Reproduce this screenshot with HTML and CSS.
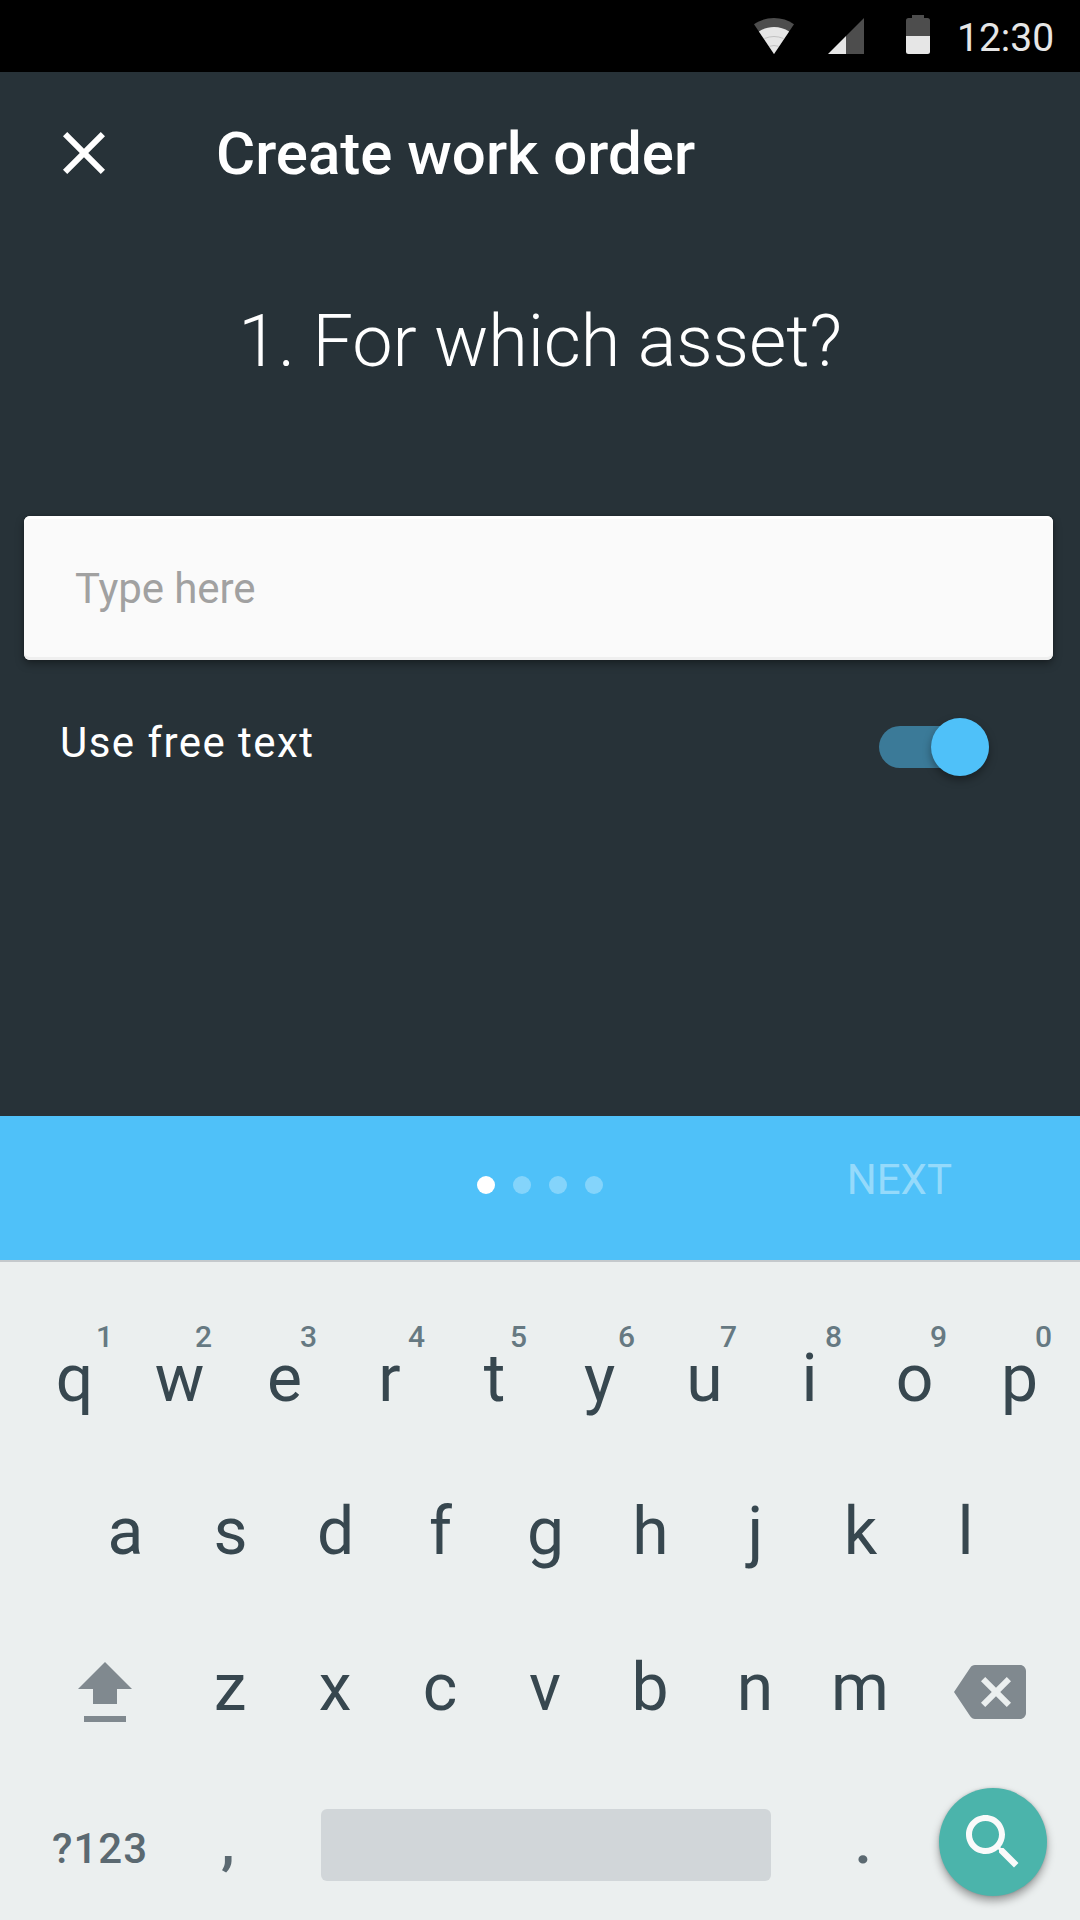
FILE: index.html
```html
<!DOCTYPE html>
<html lang="en">
<head>
<meta charset="utf-8">
<title>Create work order</title>
<link rel="stylesheet" href="styles.css">
</head>
<body>
<div class="screen">
  <div class="status-bar">
    <svg class="wifi" width="40" height="36" viewBox="0 0 40 36">
      <path fill="#4d4d4d" d="M20 36 0 6.300C5.800 2.200 12.700 0 20 0s14.200 2.200 20 6.300z"/>
      <path fill="#e6e6e6" d="M20 36 4.900 13.500C9.300 10.600 14.500 9 20 9s10.700 1.600 15.100 4.500z"/>
      <path fill="none" stroke="#b8b8b8" stroke-width=".8" d="M10.500 20.500Q20 16.500 29.500 20.500M15.500 28.300Q20 26.700 24.500 28.300"/>
    </svg>
    <svg class="signal" width="36" height="36" viewBox="0 0 36 36">
      <path fill="#4d4d4d" d="M36 0v36H18V18z"/>
      <path fill="#e6e6e6" d="M18 18v18H0z"/>
    </svg>
    <svg class="battery" width="24" height="39" viewBox="0 0 24 39">
      <path fill="#4d4d4d" d="M6 0h12v3h3.500A2.500 2.500 0 0 1 24 5.500V21H0V5.500A2.500 2.500 0 0 1 2.500 3H6z"/>
      <path fill="#e6e6e6" d="M0 21h24v15.500a2.500 2.500 0 0 1-2.500 2.500h-19A2.500 2.500 0 0 1 0 36.500z"/>
    </svg>
    <span class="clock">12:30</span>
  </div>

  <header class="app-bar">
    <svg class="close" width="72" height="72" viewBox="0 0 24 24"><path fill="#fff" d="M19 6.410 17.590 5 12 10.590 6.410 5 5 6.410 10.590 12 5 17.590 6.410 19 12 13.410 17.590 19 19 17.590 13.410 12z"/></svg>
    <h1 class="title">Create work order</h1>
  </header>

  <main class="form">
    <h2 class="question">1. For which asset?</h2>
    <div class="field">Type here</div>
    <div class="option">
      <span class="option-label">Use free text</span>
      <span class="switch"><span class="thumb"></span></span>
    </div>
  </main>

  <nav class="stepper">
    <div class="dots"><i class="dot active"></i><i class="dot"></i><i class="dot"></i><i class="dot"></i></div>
    <span class="next">NEXT</span>
  </nav>

  <section class="keyboard">
    <div class="row row-top">
      <span class="key">q<sup class="hint hint-1">1</sup></span>
      <span class="key">w<sup class="hint">2</sup></span>
      <span class="key">e<sup class="hint">3</sup></span>
      <span class="key">r<sup class="hint hint-4">4</sup></span>
      <span class="key">t<sup class="hint">5</sup></span>
      <span class="key">y<sup class="hint hint-6">6</sup></span>
      <span class="key">u<sup class="hint">7</sup></span>
      <span class="key">i<sup class="hint">8</sup></span>
      <span class="key">o<sup class="hint">9</sup></span>
      <span class="key">p<sup class="hint">0</sup></span>
    </div>
    <div class="row row-home">
      <span class="key">a</span><span class="key">s</span><span class="key">d</span><span class="key">f</span><span class="key">g</span><span class="key">h</span><span class="key">j</span><span class="key">k</span><span class="key">l</span>
    </div>
    <div class="row row-bottom">
      <span class="key shift"><svg width="54" height="60" viewBox="0 0 54 60"><path fill="#80898f" d="M27 0 54 27H39v15H15V27H0zM6 54h42v6H6z"/></svg></span>
      <span class="key">z</span><span class="key">x</span><span class="key">c</span><span class="key">v</span><span class="key">b</span><span class="key">n</span><span class="key">m</span>
      <span class="key backspace"><svg width="72" height="72" viewBox="0 0 24 24"><path fill="#80898f" d="M22 3H7c-.690 0-1.230.350-1.590.880L0 12l5.410 8.110c.360.530.900.890 1.590.890h15c1.100 0 2-.900 2-2V5c0-1.100-.900-2-2-2zm-3 12.590L17.590 17 14 13.410 10.410 17 9 15.590 12.590 12 9 8.410 10.410 7 14 10.590 17.590 7 19 8.410 15.410 12z"/></svg></span>
    </div>
    <div class="row row-space">
      <span class="symbols">?123</span>
      <span class="punct comma">,</span>
      <span class="space"></span>
      <span class="punct period">.</span>
      <span class="search"><svg width="72" height="72" viewBox="0 0 24 24"><path fill="#fafafa" d="M15.500 14h-.790l-.280-.270C15.410 12.590 16 11.110 16 9.500 16 5.910 13.090 3 9.500 3S3 5.910 3 9.500 5.910 16 9.500 16c1.610 0 3.090-.590 4.230-1.570l.270.280v.790l5 4.990L20.490 19zm-6 0C7.010 14 5 11.990 5 9.500S7.010 5 9.500 5 14 7.010 14 9.500 11.990 14 9.500 14z"/></svg></span>
    </div>
  </section>
</div>
</body>
</html>
```
FILE: styles.css
```css
* {
  box-sizing: border-box;
}

body {
  margin: 0;
  font-family: Roboto, sans-serif;
}

svg {
  display: block;
  flex: none;
}

.screen {
  display: flex;
  flex-direction: column;
  width: 1080px;
  height: 1920px;
  overflow: hidden;
  background: #273238;
  color: #fff;
}

.status-bar {
  display: flex;
  justify-content: flex-end;
  height: 72px;
  padding: 15px 26px 0 0;
  background: #000;
}

.wifi {
  margin: 3px 34px 0 0;
}

.signal {
  margin: 3px 42px 0 0;
}

.clock {
  width: 124px;
  padding-left: 27px;
  font-size: 39px;
  line-height: 47px;
  color: #e6e6e6;
  white-space: nowrap;
}

.app-bar {
  display: flex;
  align-items: center;
  gap: 96px;
  height: 162px;
  padding-left: 48px;
}

.title {
  margin: 0;
  padding-top: 2px;
  font-size: 60px;
  font-weight: 500;
  line-height: 72px;
}

.form {
  height: 882px;
  padding: 66px 27px 0 24px;
}

.question {
  margin: 0 0 132px;
  padding-left: 3px;
  font-size: 72px;
  font-weight: 300;
  line-height: 84px;
  letter-spacing: -.1px;
  text-align: center;
}

.field {
  height: 144px;
  padding-left: 51px;
  border-radius: 6px;
  background: #fafafa;
  box-shadow: 0 4px 8px rgba(0, 0, 0, .35), 0 0 3px rgba(0, 0, 0, .2), inset 0 3px 0 #fff, inset 0 -3px 0 #efefef;
  color: #a1a1a1;
  font-size: 42px;
  line-height: 145px;
  letter-spacing: -.1px;
}

.option {
  display: flex;
  justify-content: space-between;
  align-items: center;
  height: 60px;
  margin-top: 57px;
  padding: 0 64px 0 36px;
}

.option-label {
  padding-bottom: 10px;
  font-size: 42px;
  line-height: 49px;
  letter-spacing: 1.450px;
}

.switch {
  display: flex;
  justify-content: flex-end;
  align-items: center;
  width: 110px;
  height: 42px;
  border-radius: 21px;
  background: #3b7a98;
}

.thumb {
  flex: none;
  width: 58px;
  height: 58px;
  border-radius: 50%;
  background: #4fc1f9;
  box-shadow: 0 4px 8px rgba(0, 0, 0, .35);
}

.stepper {
  display: grid;
  grid-template-columns: 1fr auto 1fr;
  align-items: center;
  height: 144px;
  background: #4fc1f9;
}

.dots {
  grid-column: 2;
  display: flex;
  gap: 18px;
  padding-bottom: 6px;
}

.dot {
  width: 18px;
  height: 18px;
  border-radius: 50%;
  background: #84d4fb;
}

.dot.active {
  background: #fff;
}

.next {
  justify-self: end;
  padding: 0 128px 17px 0;
  font-size: 42px;
  line-height: 49px;
  color: #95dafb;
}

.keyboard {
  flex: 1;
  padding-top: 40px;
  border-top: 2px solid #c4c9cc;
  background: #ebefef;
  color: #37474f;
}

.row {
  display: flex;
  align-items: center;
  height: 153px;
  font-size: 66px;
}

.row-top {
  padding-left: 22px;
}

.row-home {
  padding: 1px 0 0 73px;
}

.row-bottom {
  height: 159px;
  padding-left: 52.500px;
}

.key {
  position: relative;
  display: flex;
  justify-content: center;
  flex: none;
  width: 105px;
  line-height: 78px;
}

.hint {
  position: absolute;
  top: -21px;
  left: 68px;
  font-size: 30px;
  font-weight: 500;
  line-height: 36px;
  color: #667982;
}

.hint-1 {
  left: 74px;
}

.hint-4 {
  left: 71px;
}

.hint-6 {
  left: 71px;
}

.shift {
  margin-right: 20px;
  padding-top: 9px;
}

.backspace {
  margin-left: 25px;
  padding-top: 9px;
}

.row-space {
  color: #5b6971;
  font-weight: 500;
}

.symbols {
  width: 167px;
  padding: 10px 0 0 52px;
  font-size: 42px;
  letter-spacing: 1px;
}

.punct {
  font-size: 56px;
  font-weight: 700;
  line-height: 64px;
}

.comma {
  width: 100px;
  margin-left: 54px;
}

.space {
  width: 450px;
  height: 72px;
  margin-top: 3px;
  border-radius: 6px;
  background: #d1d6d9;
}

.period {
  width: 84px;
  margin-left: 84px;
}

.search {
  display: flex;
  align-items: center;
  justify-content: center;
  width: 108px;
  height: 108px;
  margin-top: -3px;
  border-radius: 50%;
  background: #4bb4ab;
  box-shadow: 0 5px 8px rgba(0, 0, 0, .35), 0 0 3px rgba(0, 0, 0, .15);
}
```
